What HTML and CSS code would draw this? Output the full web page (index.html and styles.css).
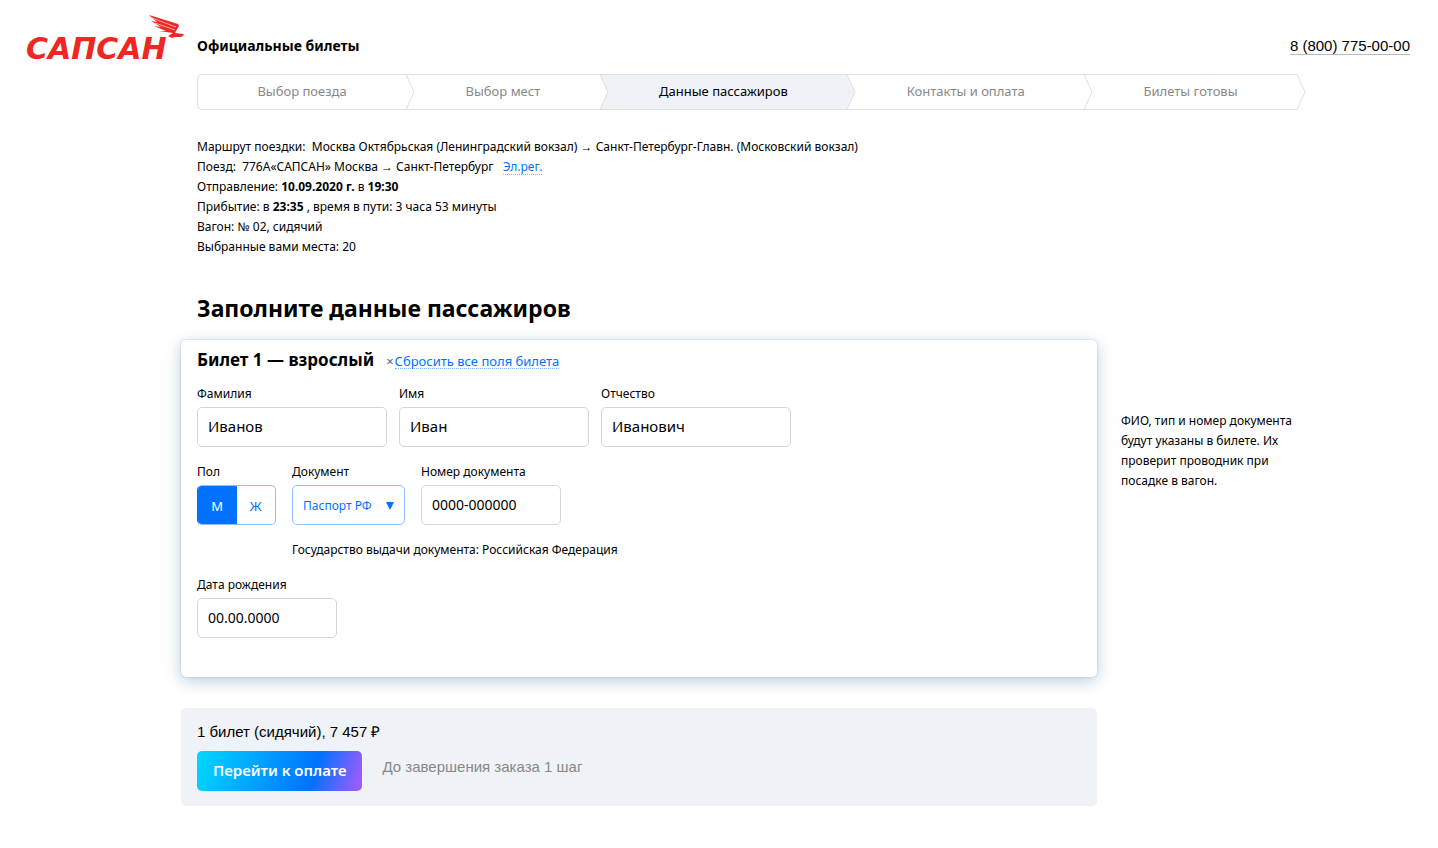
FILE: index.html
```
<!DOCTYPE html>
<html lang="ru">
<head>
<meta charset="utf-8">
<meta name="viewport" content="width=device-width, initial-scale=1">
<title>Данные пассажиров</title>
<link rel="stylesheet" href="styles.css">
</head>
<body>
<header class="header">
  <a class="logo" href="#" aria-label="Сапсан">
    <svg width="160" height="48" viewBox="0 0 160 48" fill="#ee2722">
      <text class="logo-word" x="0" y="45">САПСАН</text>
      <path d="M123 1L152 10L153 12L150 17L149 19L157 20L158 21L155 23H149L146 24L142 22L147 19L133 17L140 17L128 12L135 13L125 7L131 8Z"/>
      <path d="M126 4L150 13M129 9L149 16" fill="none" stroke="#fff" stroke-width=".6"/>
    </svg>
  </a>
  <strong class="slogan">Официальные билеты</strong>
  <a class="phone" href="tel:88007750000">8 (800) 775-00-00</a>
</header>
<div class="page">
  <ol class="steps">
    <li class="step">Выбор поезда<svg class="chevron" viewBox="0 0 9 36"><path d="M0 .5L8 18L0 35.5"/></svg></li>
    <li class="step">Выбор мест<svg class="chevron" viewBox="0 0 9 36"><path d="M0 .5L8 18L0 35.5"/></svg></li>
    <li class="step step-active" aria-current="step">Данные пассажиров<svg class="chevron" viewBox="0 0 9 36"><path d="M0 .5L8 18L0 35.5"/></svg></li>
    <li class="step">Контакты и оплата<svg class="chevron" viewBox="0 0 9 36"><path d="M0 .5L8 18L0 35.5"/></svg></li>
    <li class="step">Билеты готовы<svg class="chevron" viewBox="0 0 9 36"><path d="M0 .5L8 18L0 35.5"/></svg></li>
  </ol>
  <section class="trip">
    <p>Маршрут поездки:&nbsp; Москва Октябрьская (Ленинградский вокзал) → Санкт-Петербург-Главн. (Московский вокзал)</p>
    <p>Поезд:&nbsp; 776А«САПСАН» Москва → Санкт-Петербург <a class="link reg-link" href="#">Эл.рег.</a></p>
    <p>Отправление: <b>10.09.2020 г.</b> в <b>19:30</b></p>
    <p>Прибытие: в <b>23:35</b> , время в пути: 3 часа 53 минуты</p>
    <p>Вагон: № 02, сидячий</p>
    <p>Выбранные вами места: 20</p>
  </section>
  <h1 class="title">Заполните данные пассажиров</h1>
  <form class="order">
    <section class="ticket">
      <div class="ticket-head">
        <h2 class="ticket-title">Билет 1 — взрослый</h2>
        <button class="reset" type="button"><span class="cross">×</span><span class="link">Сбросить все поля билета</span></button>
      </div>
      <div class="row names">
        <div class="field"><label for="surname">Фамилия</label><input class="input" id="surname" type="text" value="Иванов"></div>
        <div class="field"><label for="name">Имя</label><input class="input" id="name" type="text" value="Иван"></div>
        <div class="field"><label for="patronymic">Отчество</label><input class="input" id="patronymic" type="text" value="Иванович"></div>
      </div>
      <div class="row">
        <fieldset class="field sex">
          <legend>Пол</legend>
          <div class="toggle">
            <label class="option"><input type="radio" name="sex" checked><span>М</span></label>
            <label class="option"><input type="radio" name="sex"><span>Ж</span></label>
          </div>
        </fieldset>
        <div class="document">
          <div class="row">
            <div class="field">
              <label for="doc">Документ</label>
              <div class="select-wrap">
                <select class="select" id="doc"><option>Паспорт РФ</option></select>
                <svg class="arrow" width="8" height="8" viewBox="0 0 8 8"><path d="M0 0H8L4 8Z"/></svg>
              </div>
            </div>
            <div class="field"><label for="number">Номер документа</label><input class="input short" id="number" type="text" value="0000-000000"></div>
          </div>
          <p class="country">Государство выдачи документа: Российская Федерация</p>
        </div>
      </div>
      <div class="field"><label for="birth">Дата рождения</label><input class="input short" id="birth" type="text" value="00.00.0000"></div>
    </section>
    <aside class="note">ФИО, тип и номер документа будут указаны в билете. Их проверит проводник при посадке в вагон.</aside>
    <section class="summary">
      <p class="total">1 билет (сидячий), 7 457 ₽</p>
      <div class="actions">
        <button class="pay" type="submit">Перейти к оплате</button>
        <span class="left">До завершения заказа 1 шаг</span>
      </div>
    </section>
  </form>
</div>
</body>
</html>
```
FILE: styles.css
```
* { box-sizing: border-box; }
body {
  margin: 0;
  background: #fff;
  color: #000;
  font: 12px/20px "Noto Sans", sans-serif;
}
p, h1, h2 { margin: 0; }
button, input, select { font-family: inherit; color: inherit; }

.header {
  display: flex;
  align-items: flex-end;
  height: 62px;
  padding: 0 28px 0 26px;
}
.logo { flex: 0 0 171px; height: 48px; }
.logo svg { display: block; overflow: visible; }
.logo-word { font: italic bold 30px "DejaVu Sans", sans-serif; }
.slogan { font-size: 14px; line-height: 20px; margin-bottom: 6px; }
.phone {
  margin: 0 0 7px auto;
  border-bottom: 1px solid #bbb;
  color: #000;
  font: 15px/16px "Liberation Sans", sans-serif;
  text-decoration: none;
}

.page { margin: 12px 133px 42px 197px; }
.steps {
  display: flex;
  height: 36px;
  margin: 0 8px 27px 0;
  padding: 0;
  border: 1px solid #dedede;
  border-right: 0;
  border-radius: 5px 0 0 5px;
  list-style: none;
  font-size: 13px;
}
.step {
  position: relative;
  flex: 1 1 auto;
  color: #888;
  line-height: 32px;
  text-align: center;
}
.step-active { background: #eff2f7; color: #000; }
.chevron {
  position: absolute;
  z-index: 1;
  top: -1px;
  left: 100%;
  width: 9px;
  height: 36px;
  fill: #fff;
  stroke: #dedede;
}
.step-active .chevron { fill: #eff2f7; }

.link { border-bottom: 1px dotted #80b9ff; color: #0072ff; text-decoration: none; display: inline-block; line-height: 14px; }
.reg-link { margin-left: 6px; }

.title { margin: 35px 0 16px; font-size: 23px; line-height: 32px; }

.order {
  display: grid;
  grid-template-columns: 1fr 184px;
  column-gap: 24px;
  row-gap: 31px;
  margin-left: -16px;
}
.ticket {
  padding: 8px 16px 39px;
  border-radius: 5px;
  background: #fff;
  box-shadow: 0 0 2px rgba(0, 70, 110, .25), 0 4px 16px rgba(0, 80, 130, .28);
}
.ticket-head { display: flex; align-items: baseline; gap: 12px; height: 24px; margin-bottom: 12px; }
.ticket-title { font-size: 17px; line-height: 24px; }
.reset { padding: 0; border: 0; background: none; font-size: 13px; line-height: 20px; cursor: pointer; }
.cross { margin-right: 1px; color: #4a6a95; }

.row { display: flex; gap: 16px; }
.row.names { gap: 12px; margin-bottom: 15px; }
.names .field { flex: 0 1 190px; }
.field { min-width: 0; margin: 0; padding: 0; border: 0; }
.field > label, .field > legend { display: block; padding: 0; margin-bottom: 3px; }
.input {
  display: block;
  width: 100%;
  height: 40px;
  padding: 0 10px 2px;
  border: 1px solid #d6d6d6;
  border-radius: 5px;
  background: #fff;
  font-size: 15px;
}
.input.short { width: 140px; font-size: 14px; }

.toggle { display: flex; width: 79px; height: 40px; border: 1px solid #8fc1ff; border-radius: 5px; overflow: hidden; }
.option { flex: 1; color: #0072ff; font-size: 13px; line-height: 40px; text-align: center; cursor: pointer; }
.option input { position: absolute; opacity: 0; }
.option span { display: block; }
.option input:checked + span { background: #0072ff; color: #fff; }
.toggle:has(.option:first-child input:checked) { border-left-color: #0072ff; }

.select-wrap { position: relative; }
.select {
  appearance: none;
  display: block;
  width: 113px;
  height: 40px;
  padding: 0 10px;
  border: 1px solid #8fc1ff;
  border-radius: 5px;
  background: #fff;
  color: #0072ff;
  font-size: 12px;
}
.arrow { position: absolute; top: 17px; right: 11px; fill: #0072ff; pointer-events: none; }
.country { margin: 15px 0; }

.note { margin-top: 71px; }
.summary { padding: 14px 16px 15px; border-radius: 5px; background: #eff2f7; font-family: "Liberation Sans", sans-serif; font-size: 15px; }
.total { margin-bottom: 9px; }
.actions { display: flex; align-items: center; gap: 20px; }
.pay {
  height: 40px;
  padding: 0 16px 2px;
  border: 0;
  border-radius: 5px;
  background: linear-gradient(107deg, #00d9ff 0%, #0072ff 70%, #ab5afd 100%);
  color: #fff;
  font: 600 15px/20px "Noto Sans", sans-serif;
  cursor: pointer;
}
.left { margin-bottom: 8px; color: #888; }
```
